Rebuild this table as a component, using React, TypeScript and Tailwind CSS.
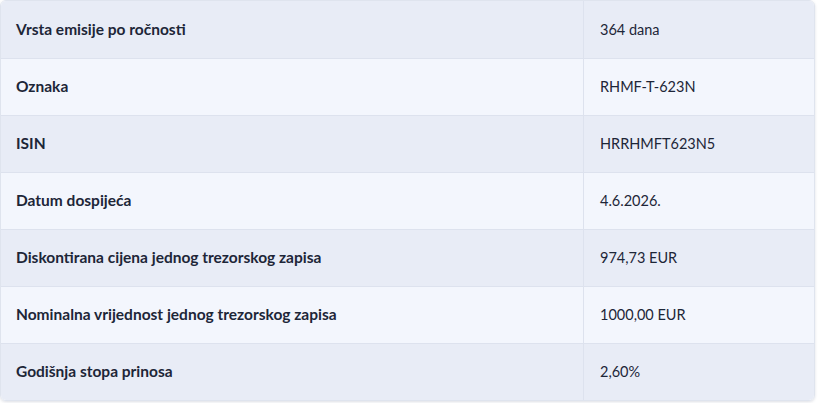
import React from "react";

const rows: [string, string][] = [
  ["Vrsta emisije po ročnosti", "364 dana"],
  ["Oznaka", "RHMF-T-623N"],
  ["ISIN", "HRRHMFT623N5"],
  ["Datum dospijeća", "4.6.2026."],
  ["Diskontirana cijena jednog trezorskog zapisa", "974,73 EUR"],
  ["Nominalna vrijednost jednog trezorskog zapisa", "1000,00 EUR"],
  ["Godišnja stopa prinosa", "2,60%"],
];

export default function App() {
  return (
    <div className="w-[818px] h-[403px] bg-white" style={{ fontFamily: "Lato, 'Noto Sans', sans-serif" }}>
      <div className="w-[815px] rounded-md border border-[#dfe4ee] overflow-hidden shadow-[0_1px_3px_rgba(30,40,80,0.15)]">
        {rows.map(([k, v], i) => (
          <div
            key={k}
            className={`grid grid-cols-[583px_1fr] h-[57px] ${i > 0 ? "border-t border-[#dde2ee]" : ""} ${i % 2 === 0 ? "bg-[#e8ecf6]" : "bg-[#f3f6fd]"}`}
          >
            <div className="flex items-center pl-[15px] text-[15.5px] font-bold text-[#1d2638] border-r border-[#dde2ee]">{k}</div>
            <div className="flex items-center pl-4 text-[14.5px] text-[#1d2638]">{v}</div>
          </div>
        ))}
      </div>
    </div>
  );
}
